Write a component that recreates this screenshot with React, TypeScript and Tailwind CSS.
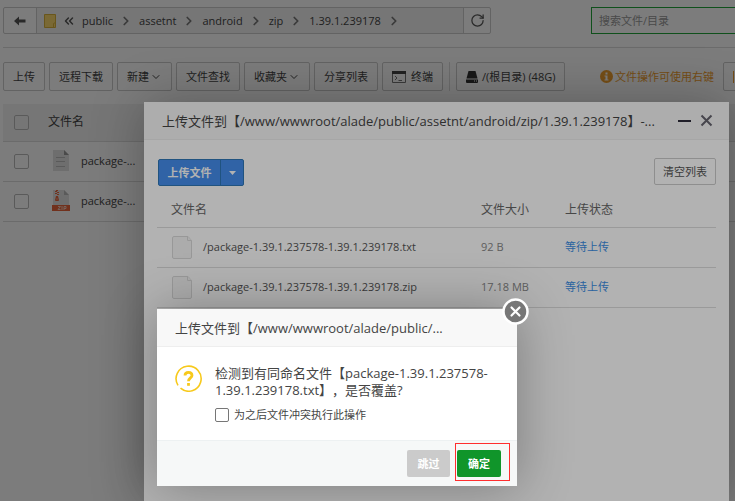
import { useState } from "react"
import { ChevronDown, ChevronRight, ChevronsLeft, RotateCw } from "lucide-react"

const crumbs = ["public", "assetnt", "android", "zip", "1.39.1.239178"]

const files = [
  { id: 1, name: "package-...", type: "txt" },
  { id: 2, name: "package-...", type: "zip" },
]

const uploads = [
  { name: "/package-1.39.1.237578-1.39.1.239178.txt", size: "92 B", status: "等待上传" },
  { name: "/package-1.39.1.237578-1.39.1.239178.zip", size: "17.18 MB", status: "等待上传" },
]

const toolButton =
  "flex h-[29px] shrink-0 items-center whitespace-nowrap rounded-xs border border-[#ccc] px-[9px]"

function TxtIcon() {
  return (
    <svg width="18" height="22" viewBox="0 0 18 22">
      <path d="M1 0h11l5 5v16H1z" fill="#e3e3e3" />
      <path d="M12 0l5 5h-5z" fill="#999" />
      <path d="M4 7.500h9M4 11.500h9M4 16.500h9" stroke="#bbb" />
    </svg>
  )
}

function ZipIcon() {
  return (
    <svg width="18" height="22" viewBox="0 0 18 22">
      <path d="M1 0h11l5 5v10H1z" fill="#e3e3e3" />
      <path d="M12 0l5 5h-5z" fill="#bbb" />
      <path d="M4 0h2v1H4zM3 1h2v1H3zM5 2h2v1H5zM3 3h2v1H3zM5 4h2v1H5z" fill="#e8663d" />
      <path d="M4 6h2l1 4a1 1 0 0 1-1 1H4a1 1 0 0 1-1-1z" fill="#e8663d" />
      <path d="M4.500 9h1" stroke="#e3e3e3" />
      <path d="M0 15h18v6H0z" fill="#e8663d" />
      <path d="M6 16.500h2.500L6 19.500h2.500M10 16v4M12 20v-3.500h2v2h-2" fill="none" stroke="#f3cabb" />
    </svg>
  )
}

function BlankFileIcon() {
  return (
    <svg width="20" height="23" viewBox="0 0 20 23" fill="#f7f7f7" stroke="#dadada">
      <path d="M2 .5h14l3.500 4V21a1.500 1.500 0 0 1-1.500 1.500H2A1.500 1.500 0 0 1 .5 21V2A1.500 1.500 0 0 1 2 .5z" />
      <path d="M15.500 .5v4h4" />
    </svg>
  )
}

function PathBar() {
  return (
    <div className="flex items-center justify-between border-b border-[#ddd] pt-[7px] pb-[13px]">
      <div className="flex h-[27px] w-[488px] shrink-0 rounded-xs border border-[#ccc]">
        <button aria-label="返回" className="flex w-[33px] items-center justify-center border-r border-[#ccc]">
          <svg width="12" height="10" viewBox="0 0 12 10" fill="#555">
            <path d="M0 5L5 .5V3.500H11.500V6.500H5V9.500z" />
          </svg>
        </button>
        <nav className="flex flex-1 items-center bg-[#f3f3f3] pl-[7px]">
          <svg width="12" height="14" viewBox="0 0 12 14">
            <path d="M.5 .5h11v13H.5z" fill="#fbd86e" stroke="#d9b13c" />
            <path d="M9.500 13.500v-4l2-1" fill="none" stroke="#d9b13c" />
          </svg>
          <ChevronsLeft className="mx-[6px] h-[14px] w-[14px] text-[#555]" strokeWidth={2.5} />
          {crumbs.map(crumb => (
            <span key={crumb} className="flex items-center">
              <a href="#">{crumb}</a>
              <ChevronRight className="mx-[6px] h-[14px] w-[14px] text-[#777]" strokeWidth={3} />
            </span>
          ))}
        </nav>
        <button aria-label="刷新" className="flex w-[27px] items-center justify-center border-l border-[#ccc] text-[#555]">
          <RotateCw className="h-[15px] w-[15px]" />
        </button>
      </div>
      <input
        type="text"
        aria-label="搜索"
        placeholder="搜索文件/目录"
        className="-mr-10 h-[27px] w-[184px] shrink-0 border border-[#20a53a] px-[7px] placeholder:text-[#999]"
      />
    </div>
  )
}

function Toolbar() {
  return (
    <div className="flex items-center gap-1 pt-[14px] pb-[13px]">
      <button className={toolButton}>上传</button>
      <button className={toolButton}>远程下载</button>
      <button className={toolButton}>
        新建 <ChevronDown className="ml-px h-[12px] w-[12px]" />
      </button>
      <button className={toolButton}>文件查找</button>
      <button className={toolButton}>
        收藏夹 <ChevronDown className="ml-px h-[12px] w-[12px]" />
      </button>
      <button className={toolButton}>分享列表</button>
      <button className={toolButton}>
        <svg className="mr-[5px]" width="14" height="12" viewBox="0 0 14 12">
          <path d="M.5 .5h13v11H.5z" fill="none" stroke="#777" />
          <path d="M0 0h14v3H0z" fill="#444" />
          <path d="M3 5l2 2-2 2M6.500 9.500h3.500" fill="none" stroke="#777" />
        </svg>
        终端
      </button>
      <span className="mx-[2px] h-[29px] w-px bg-[#ddd]" />
      <button className={toolButton}>
        <svg className="mr-1" width="12" height="12" viewBox="0 0 12 12" fill="#333">
          <path d="M2.500 0h7L11.500 7.500H.5z" />
          <path d="M0 8.500h12V11a1 1 0 0 1-1 1H1a1 1 0 0 1-1-1z" />
          <path d="M8 10h1M10 10h1" stroke="#fff" />
        </svg>
        /(根目录) (48G)
      </button>
      <span className="-mr-10 ml-auto flex shrink-0 items-center gap-[9px]">
        <span className="flex items-center gap-[2px] whitespace-nowrap text-[#f0a030]">
          <svg width="13" height="13" viewBox="0 0 13 13">
            <circle cx="6.500" cy="6.500" r="6.500" fill="#f0a030" />
            <path d="M5.500 2.500h2v2h-2zM4.500 5.500h3v4h1v1h-4v-1h1v-3h-1z" fill="#fff" />
          </svg>
          文件操作可使用右键
        </span>
        <button aria-label="更多" className={toolButton + " w-[52px]"}>
          <span className="h-3 w-8 border-l border-[#f0a030]" />
        </button>
      </span>
    </div>
  )
}

function FileTable() {
  return (
    <table className="w-full text-left">
      <thead>
        <tr className="h-[37px] border-b border-[#ddd] bg-[#f3f3f3] text-xs">
          <th className="w-[45px] pl-[11px] font-normal">
            <input type="checkbox" aria-label="全选" className="block h-[15px] w-[15px] appearance-none rounded-xs border border-[#bbb]" />
          </th>
          <th className="font-normal">文件名</th>
        </tr>
      </thead>
      <tbody>
        {files.map(file => (
          <tr key={file.id} className="h-[40px] border-b border-[#ddd]">
            <td className="pl-[11px]">
              <input type="checkbox" aria-label={file.name} className="block h-[15px] w-[15px] appearance-none rounded-xs border border-[#bbb]" />
            </td>
            <td>
              <span className="flex items-center gap-[11px] pl-1">
                {file.type === "zip" ? <ZipIcon /> : <TxtIcon />}
                {file.name}
              </span>
            </td>
          </tr>
        ))}
      </tbody>
    </table>
  )
}

function UploadDialog() {
  return (
    <section className="absolute top-[102px] right-[6px] bottom-0 left-[144px] bg-white shadow-[1px_1px_50px_rgba(0,0,0,0.3)]">
      <header className="flex h-[38px] items-center justify-between border-b border-[#eee] bg-[#f8f8f8] pr-4 pl-[18px] text-[13px]">
        <h2 className="truncate">上传文件到【/www/wwwroot/alade/public/assetnt/android/zip/1.39.1.239178】-...</h2>
        <div className="flex shrink-0 items-center gap-2">
          <button aria-label="最小化" className="flex h-4 w-4 items-center justify-center">
            <span className="h-[2px] w-[13px] bg-[#2e2d3c]" />
          </button>
          <button aria-label="关闭">
            <svg className="block" width="13" height="13" viewBox="0 0 13 13" stroke="#66656f" strokeWidth="2">
              <path d="M1.500 1.500l10 10M11.500 1.500l-10 10" />
            </svg>
          </button>
        </div>
      </header>
      <div className="px-[13px] pt-[18px]">
        <div className="flex items-start justify-between pl-px">
          <div className="mt-px flex h-[27px] rounded-xs border border-[#2f78b8] bg-[#458fee] font-bold text-white">
            <button className="w-[61px]">上传文件</button>
            <button aria-label="更多" className="flex w-[23px] items-center justify-center border-l border-[#2f78b8]">
              <svg width="7" height="4" viewBox="0 0 7 4" fill="#fff">
                <path d="M0 0h7L3.500 4z" />
              </svg>
            </button>
          </div>
          <button className="h-[27px] rounded-xs border border-[#ccc] px-2 text-[#555]">清空列表</button>
        </div>
        <table className="mt-2 w-full table-fixed text-left">
          <thead>
            <tr className="h-[33px] border-b border-[#ddd] text-xs text-[#666]">
              <th className="pl-[14px] font-normal">文件名</th>
              <th className="w-[84px] font-normal">文件大小</th>
              <th className="w-[151px] font-normal">上传状态</th>
            </tr>
          </thead>
          <tbody>
            {uploads.map(item => (
              <tr key={item.name} className="h-[40px] border-b border-[#ddd]">
                <td>
                  <span className="flex items-center gap-[11px] pl-[15px] text-[#555]">
                    <BlankFileIcon />
                    {item.name}
                  </span>
                </td>
                <td className="text-[#888]">{item.size}</td>
                <td className="text-[#3c8fe4]">{item.status}</td>
              </tr>
            ))}
          </tbody>
        </table>
      </div>
    </section>
  )
}

function ConfirmDialog() {
  const [applyAll, setApplyAll] = useState(false)

  return (
    <section className="absolute top-[309px] left-[157px] w-[360px] bg-white shadow-[1px_1px_50px_rgba(0,0,0,0.3)]">
      <header className="flex h-[38px] items-center border-b border-[#eee] bg-[#f8f8f8] px-[18px] text-[13px]">
        <h2>上传文件到【/www/wwwroot/alade/public/...</h2>
      </header>
      <button aria-label="关闭" className="absolute -top-[11px] -right-[12px]">
        <svg className="block" width="27" height="27" viewBox="0 0 27 27">
          <circle cx="13.500" cy="13.500" r="12" fill="#777" stroke="#fff" strokeWidth="2.500" />
          <path d="M9.500 9.500l8 8M17.500 9.500l-8 8" stroke="#fff" strokeWidth="2.200" strokeLinecap="round" />
        </svg>
      </button>

      <div className="flex h-[93px] gap-[13px] pt-[18px] pl-[18px]">
        <svg className="shrink-0" width="27" height="27" viewBox="0 0 27 27" fill="none" stroke="#f7c91c">
          <path d="M5.500 23.200A12.500 12.500 0 1 0 3 20.300" strokeWidth="1.600" />
          <path d="M10 10.500c0-4.200 7-4.200 7 0 0 2.500-3.500 2.500-3.500 5.800" strokeWidth="2.800" />
          <path d="M13.500 18v2.800" strokeWidth="2.800" />
        </svg>
        <div>
          <p className="w-[290px] text-[13px] leading-[17px] [text-spacing-trim:space-all]">
            检测到有同命名文件【package-1.39.1.237578-<br />
            1.39.1.239178.txt】，是否覆盖?
          </p>
          <label className="mt-2 flex items-center gap-[5px]">
            <input
              type="checkbox"
              checked={applyAll}
              onChange={e => setApplyAll(e.target.checked)}
              className="h-[14px] w-[14px] appearance-none rounded-xs border border-[#767676] checked:bg-[#20a53a]"
            />
            为之后文件冲突执行此操作
          </label>
        </div>
      </div>

      <footer className="flex h-[46px] items-center justify-end gap-[7px] border-t border-[#edf1f2] bg-[#f6f8f8] pr-4 font-bold text-white">
        <button className="h-[27px] w-[43px] rounded-xs bg-[#cbcbcb]">跳过</button>
        <button className="h-[27px] w-[44px] rounded-xs bg-[#10952a]">确定</button>
      </footer>
      {/* highlight around the confirm button */}
      <div className="pointer-events-none absolute right-[7px] bottom-[5px] h-[38px] w-[55px] border border-[#ff2e2e]" />
    </section>
  )
}

export default function App() {
  return (
    <main className="relative h-screen overflow-hidden bg-white font-['Open_Sans','Noto_Sans_CJK_SC',sans-serif] text-[11px] leading-4 text-[#444]">
      <div className="pl-[3px]">
        <PathBar />
        <Toolbar />
        <FileTable />
      </div>
      <div className="absolute inset-0 bg-black/30" />
      <UploadDialog />
      <div className="absolute inset-0 bg-black/30" />
      <ConfirmDialog />
    </main>
  )
}
